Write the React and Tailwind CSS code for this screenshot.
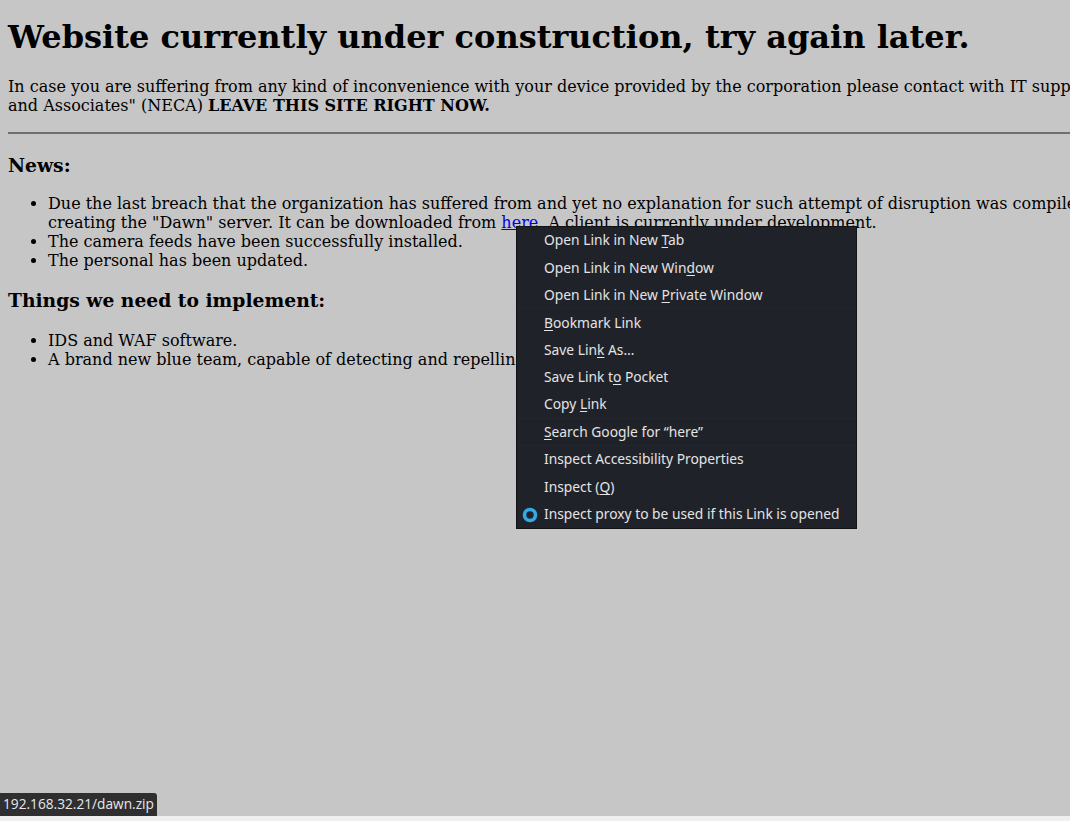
import React from "react";

const serif = { fontFamily: '"DejaVu Serif", serif' };

const menuItems = [
  { pre: "Open Link in New ", key: "T", post: "ab" },
  { pre: "Open Link in New Win", key: "d", post: "ow" },
  { pre: "Open Link in New ", key: "P", post: "rivate Window", sep: true },
  { pre: "", key: "B", post: "ookmark Link" },
  { pre: "Save Lin", key: "k", post: " As…" },
  { pre: "Save Link t", key: "o", post: " Pocket" },
  { pre: "Copy ", key: "L", post: "ink", sep: true },
  { pre: "", key: "S", post: "earch Google for “here”", sep: true },
  { pre: "Inspect Accessibility Properties", key: "", post: "" },
  { pre: "Inspect (", key: "Q", post: ")" },
  { pre: "Inspect proxy to be used if this Link is opened", key: "", post: "", radio: true },
];

function ContextMenu() {
  return (
    <div
      className="absolute left-[516px] top-[226px] w-[341px] h-[303px] bg-[#20222a] border border-[#111214] text-[#e4e4e4] text-[13.8px]"
      style={{ fontFamily: '"Noto Sans", sans-serif' }}
    >
      {menuItems.map((m, i) => (
        <div
          key={i}
          className={`relative h-[27.4px] flex items-center pl-[27px] whitespace-nowrap ${m.sep ? "border-b border-[#24262e]" : ""}`}
        >
          {m.radio && (
            <svg className="absolute left-[5px] top-[6px]" width="16" height="16" viewBox="0 0 16 16">
              <circle cx="8" cy="8" r="5.5" fill="none" stroke="#33a9e6" strokeWidth="3.6" />
            </svg>
          )}
          <span>
            {m.pre}
            {m.key && <u className="underline-offset-2">{m.key}</u>}
            {m.post}
          </span>
        </div>
      ))}
    </div>
  );
}

export default function App() {
  return (
    <div className="relative w-[1070px] h-[821px] overflow-hidden">
      <div className="h-[816px] bg-[#c6c6c6] overflow-hidden px-2 text-black text-[16px]" style={serif}>
        <h1 className="text-[32px] font-bold mt-[19.44px] mb-[20.44px] whitespace-nowrap leading-[1.17]">
          Website currently under construction, try again later.
        </h1>
        <p className="mt-[15px] mb-[17px] whitespace-nowrap leading-[19px]">
          In case you are suffering from any kind of inconvenience with your device provided by the corporation please contact with IT support. If you are not an employee of "Nostromo Engineering Corporation
          <br />
          and Associates" (NECA) <b>LEAVE THIS SITE RIGHT NOW.</b>
        </p>
        <hr className="border-0 border-t-2 border-t-[#6e6e6e] my-2 -mr-2" />
        <h3 className="text-[18.72px] font-bold mt-[20.72px] mb-[16.72px] leading-[1.17]">News:</h3>
        <ul className="list-disc pl-10 my-4 leading-[19px] whitespace-nowrap">
          <li>
            Due the last breach that the organization has suffered from and yet no explanation for such attempt of disruption was compiled, we decided to move our files by
            <br />
            creating the "Dawn" server. It can be downloaded from{" "}
            <a className="text-[#0000ee] underline">here</a>. A client is currently under development.
          </li>
          <li>The camera feeds have been successfully installed.</li>
          <li>The personal has been updated.</li>
        </ul>
        <h3 className="text-[18.72px] font-bold mt-[20.72px] mb-[18.72px] leading-[1.17]">Things we need to implement:</h3>
        <ul className="list-disc pl-10 my-4 leading-[19px] whitespace-nowrap">
          <li>IDS and WAF software.</li>
          <li>A brand new blue team, capable of detecting and repelling any kind of attack.</li>
        </ul>
      </div>
      <div className="h-[5px] bg-[#efefef]" />
      <div
        className="absolute left-0 top-[793px] h-[23px] px-[3px] bg-[#2f2f31] text-[#e8e8e8] text-[13.7px] flex items-center rounded-tr-[3px]"
        style={{ fontFamily: '"Open Sans", sans-serif' }}
      >
        192.168.32.21/dawn.zip
      </div>
      <ContextMenu />
    </div>
  );
}
